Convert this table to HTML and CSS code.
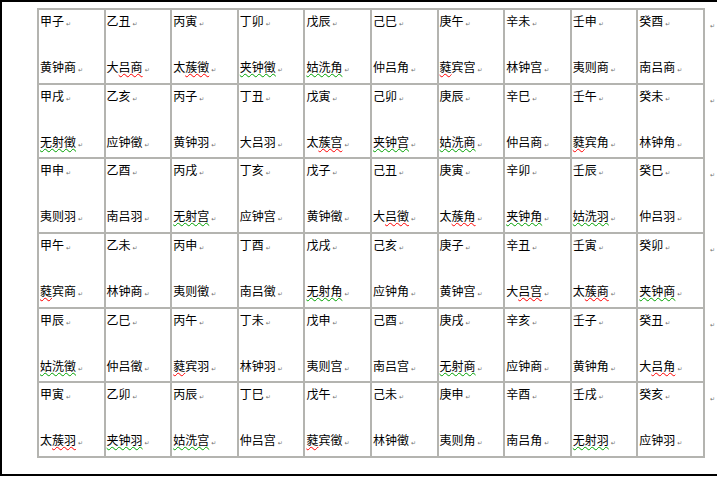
FILE: index.html
```html
<!DOCTYPE html>
<html lang="zh-CN">
<head>
<meta charset="utf-8">
<title>六十甲子纳音律吕</title>
<link rel="stylesheet" href="styles.css">
</head>
<body>
<div class="page">
<table class="grid">
<colgroup>
<col class="dc"><col class="dc"><col class="dc"><col class="dc"><col class="dc"><col class="dc"><col class="dc"><col class="dc"><col class="dc"><col class="dc"><col class="ec">
</colgroup>
<tbody>
<tr>
<td class="c"><div class="cell"><p>甲子<span class="pm">↵</span></p><p>黄钟商<span class="pm">↵</span></p></div></td>
<td class="c"><div class="cell"><p>乙丑<span class="pm">↵</span></p><p>大<span class="sr">吕商</span><span class="pm">↵</span></p></div></td>
<td class="c"><div class="cell"><p>丙寅<span class="pm">↵</span></p><p>太<span class="sr">蔟徵</span><span class="pm">↵</span></p></div></td>
<td class="c"><div class="cell"><p>丁卯<span class="pm">↵</span></p><p><span class="sg">夹钟徵</span><span class="pm">↵</span></p></div></td>
<td class="c"><div class="cell"><p>戊辰<span class="pm">↵</span></p><p><span class="sg">姑洗角</span><span class="pm">↵</span></p></div></td>
<td class="c"><div class="cell"><p>己巳<span class="pm">↵</span></p><p>仲吕角<span class="pm">↵</span></p></div></td>
<td class="c"><div class="cell"><p>庚午<span class="pm">↵</span></p><p><span class="sr">蕤</span>宾宫<span class="pm">↵</span></p></div></td>
<td class="c"><div class="cell"><p>辛未<span class="pm">↵</span></p><p>林钟宫<span class="pm">↵</span></p></div></td>
<td class="c"><div class="cell"><p>壬申<span class="pm">↵</span></p><p>夷则商<span class="pm">↵</span></p></div></td>
<td class="c"><div class="cell"><p>癸酉<span class="pm">↵</span></p><p>南吕商<span class="pm">↵</span></p></div></td>
<td class="e"><span class="pm">↵</span></td>
</tr>
<tr>
<td class="c"><div class="cell"><p>甲戌<span class="pm">↵</span></p><p><span class="sg">无射徵</span><span class="pm">↵</span></p></div></td>
<td class="c"><div class="cell"><p>乙亥<span class="pm">↵</span></p><p>应钟徵<span class="pm">↵</span></p></div></td>
<td class="c"><div class="cell"><p>丙子<span class="pm">↵</span></p><p>黄钟羽<span class="pm">↵</span></p></div></td>
<td class="c"><div class="cell"><p>丁丑<span class="pm">↵</span></p><p>大吕羽<span class="pm">↵</span></p></div></td>
<td class="c"><div class="cell"><p>戊寅<span class="pm">↵</span></p><p>太<span class="sr">蔟宫</span><span class="pm">↵</span></p></div></td>
<td class="c"><div class="cell"><p>己卯<span class="pm">↵</span></p><p><span class="sg">夹钟宫</span><span class="pm">↵</span></p></div></td>
<td class="c"><div class="cell"><p>庚辰<span class="pm">↵</span></p><p><span class="sg">姑洗商</span><span class="pm">↵</span></p></div></td>
<td class="c"><div class="cell"><p>辛巳<span class="pm">↵</span></p><p>仲吕商<span class="pm">↵</span></p></div></td>
<td class="c"><div class="cell"><p>壬午<span class="pm">↵</span></p><p><span class="sr">蕤</span>宾角<span class="pm">↵</span></p></div></td>
<td class="c"><div class="cell"><p>癸未<span class="pm">↵</span></p><p>林钟角<span class="pm">↵</span></p></div></td>
<td class="e"><span class="pm">↵</span></td>
</tr>
<tr>
<td class="c"><div class="cell"><p>甲申<span class="pm">↵</span></p><p>夷则羽<span class="pm">↵</span></p></div></td>
<td class="c"><div class="cell"><p>乙酉<span class="pm">↵</span></p><p>南吕羽<span class="pm">↵</span></p></div></td>
<td class="c"><div class="cell"><p>丙戌<span class="pm">↵</span></p><p><span class="sg">无射宫</span><span class="pm">↵</span></p></div></td>
<td class="c"><div class="cell"><p>丁亥<span class="pm">↵</span></p><p>应钟宫<span class="pm">↵</span></p></div></td>
<td class="c"><div class="cell"><p>戊子<span class="pm">↵</span></p><p>黄钟徵<span class="pm">↵</span></p></div></td>
<td class="c"><div class="cell"><p>己丑<span class="pm">↵</span></p><p>大<span class="sr">吕徵</span><span class="pm">↵</span></p></div></td>
<td class="c"><div class="cell"><p>庚寅<span class="pm">↵</span></p><p>太<span class="sr">蔟角</span><span class="pm">↵</span></p></div></td>
<td class="c"><div class="cell"><p>辛卯<span class="pm">↵</span></p><p><span class="sg">夹钟角</span><span class="pm">↵</span></p></div></td>
<td class="c"><div class="cell"><p>壬辰<span class="pm">↵</span></p><p><span class="sg">姑洗羽</span><span class="pm">↵</span></p></div></td>
<td class="c"><div class="cell"><p>癸巳<span class="pm">↵</span></p><p>仲吕羽<span class="pm">↵</span></p></div></td>
<td class="e"><span class="pm">↵</span></td>
</tr>
<tr>
<td class="c"><div class="cell"><p>甲午<span class="pm">↵</span></p><p><span class="sr">蕤</span>宾商<span class="pm">↵</span></p></div></td>
<td class="c"><div class="cell"><p>乙未<span class="pm">↵</span></p><p>林钟商<span class="pm">↵</span></p></div></td>
<td class="c"><div class="cell"><p>丙申<span class="pm">↵</span></p><p>夷则徵<span class="pm">↵</span></p></div></td>
<td class="c"><div class="cell"><p>丁酉<span class="pm">↵</span></p><p>南吕徵<span class="pm">↵</span></p></div></td>
<td class="c"><div class="cell"><p>戊戌<span class="pm">↵</span></p><p><span class="sg">无射角</span><span class="pm">↵</span></p></div></td>
<td class="c"><div class="cell"><p>己亥<span class="pm">↵</span></p><p>应钟角<span class="pm">↵</span></p></div></td>
<td class="c"><div class="cell"><p>庚子<span class="pm">↵</span></p><p>黄钟宫<span class="pm">↵</span></p></div></td>
<td class="c"><div class="cell"><p>辛丑<span class="pm">↵</span></p><p>大<span class="sr">吕宫</span><span class="pm">↵</span></p></div></td>
<td class="c"><div class="cell"><p>壬寅<span class="pm">↵</span></p><p>太<span class="sr">蔟商</span><span class="pm">↵</span></p></div></td>
<td class="c"><div class="cell"><p>癸卯<span class="pm">↵</span></p><p><span class="sg">夹钟商</span><span class="pm">↵</span></p></div></td>
<td class="e"><span class="pm">↵</span></td>
</tr>
<tr>
<td class="c"><div class="cell"><p>甲辰<span class="pm">↵</span></p><p><span class="sg">姑洗徵</span><span class="pm">↵</span></p></div></td>
<td class="c"><div class="cell"><p>乙巳<span class="pm">↵</span></p><p>仲吕徵<span class="pm">↵</span></p></div></td>
<td class="c"><div class="cell"><p>丙午<span class="pm">↵</span></p><p><span class="sr">蕤</span>宾羽<span class="pm">↵</span></p></div></td>
<td class="c"><div class="cell"><p>丁未<span class="pm">↵</span></p><p>林钟羽<span class="pm">↵</span></p></div></td>
<td class="c"><div class="cell"><p>戊申<span class="pm">↵</span></p><p>夷则宫<span class="pm">↵</span></p></div></td>
<td class="c"><div class="cell"><p>己酉<span class="pm">↵</span></p><p>南吕宫<span class="pm">↵</span></p></div></td>
<td class="c"><div class="cell"><p>庚戌<span class="pm">↵</span></p><p><span class="sg">无射商</span><span class="pm">↵</span></p></div></td>
<td class="c"><div class="cell"><p>辛亥<span class="pm">↵</span></p><p>应钟商<span class="pm">↵</span></p></div></td>
<td class="c"><div class="cell"><p>壬子<span class="pm">↵</span></p><p>黄钟角<span class="pm">↵</span></p></div></td>
<td class="c"><div class="cell"><p>癸丑<span class="pm">↵</span></p><p>大<span class="sr">吕角</span><span class="pm">↵</span></p></div></td>
<td class="e"><span class="pm">↵</span></td>
</tr>
<tr>
<td class="c"><div class="cell"><p>甲寅<span class="pm">↵</span></p><p>太<span class="sr">蔟羽</span><span class="pm">↵</span></p></div></td>
<td class="c"><div class="cell"><p>乙卯<span class="pm">↵</span></p><p><span class="sg">夹钟羽</span><span class="pm">↵</span></p></div></td>
<td class="c"><div class="cell"><p>丙辰<span class="pm">↵</span></p><p><span class="sg">姑洗宫</span><span class="pm">↵</span></p></div></td>
<td class="c"><div class="cell"><p>丁巳<span class="pm">↵</span></p><p>仲吕宫<span class="pm">↵</span></p></div></td>
<td class="c"><div class="cell"><p>戊午<span class="pm">↵</span></p><p><span class="sr">蕤</span>宾徵<span class="pm">↵</span></p></div></td>
<td class="c"><div class="cell"><p>己未<span class="pm">↵</span></p><p>林钟徵<span class="pm">↵</span></p></div></td>
<td class="c"><div class="cell"><p>庚申<span class="pm">↵</span></p><p>夷则角<span class="pm">↵</span></p></div></td>
<td class="c"><div class="cell"><p>辛酉<span class="pm">↵</span></p><p>南吕角<span class="pm">↵</span></p></div></td>
<td class="c"><div class="cell"><p>壬戌<span class="pm">↵</span></p><p><span class="sg">无射羽</span><span class="pm">↵</span></p></div></td>
<td class="c"><div class="cell"><p>癸亥<span class="pm">↵</span></p><p>应钟羽<span class="pm">↵</span></p></div></td>
<td class="e"><span class="pm">↵</span></td>
</tr>
</tbody>
</table>
</div>
</body>
</html>
```

FILE: styles.css
```css
html, body {
  margin: 0;
  padding: 0;
  background: #ffffff;
}

body {
  font-family: "Noto Sans CJK SC", "Noto Sans CJK JP", "DejaVu Sans", sans-serif;
  font-size: 12px;
  color: #000000;
}

.page {
  box-sizing: border-box;
  width: 717px;
  height: 476px;
  border-top: 2px solid #000000;
  border-left: 2px solid #000000;
  border-bottom: 2px solid #000000;
  padding: 6px 0 0 35px;
  overflow: hidden;
}

.grid {
  border-collapse: collapse;
  table-layout: fixed;
  width: 678px;
}

.grid .dc {
  width: 66.6px;
}

.grid .ec {
  width: 12px;
}

.grid td.c {
  border: 2px solid #b4b4b0;
  padding: 3px 0 4.5px 1px;
  vertical-align: top;
}

.cell {
  height: 65.17px;
  display: flex;
  flex-direction: column;
  justify-content: space-between;
}

.cell p {
  margin: 0;
  line-height: 16px;
  white-space: nowrap;
}

.grid td.e {
  border: none;
  padding: 6px 0 0 3px;
  vertical-align: top;
  line-height: 16px;
}

.pm {
  font-family: "DejaVu Sans", sans-serif;
  font-size: 6px;
  color: #707070;
  margin-left: 2px;
}

.sr {
  text-decoration: underline wavy #ff0000;
  text-decoration-thickness: 1px;
  text-underline-offset: 1px;
}

.sg {
  text-decoration: underline wavy #00a000;
  text-decoration-thickness: 1px;
  text-underline-offset: 1px;
}
```
